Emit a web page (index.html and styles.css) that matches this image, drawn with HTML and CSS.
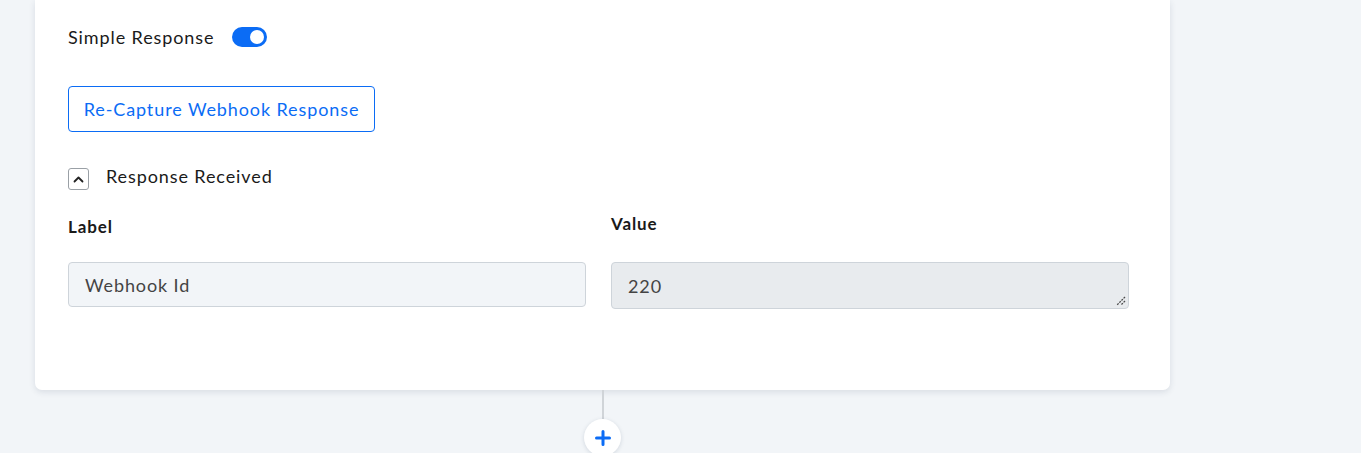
FILE: index.html
```html
<!DOCTYPE html>
<html>
<head>
<meta charset="utf-8">
<link rel="stylesheet" href="styles.css">
</head>
<body>
<div class="page">
  <div class="card">
    <div class="toggle-row">
      <span class="toggle-label">Simple Response</span>
      <span class="switch"><span class="knob"></span></span>
    </div>
    <button class="btn-outline">Re-Capture Webhook Response</button>
    <div class="collapse-row">
      <span class="chev-box">
        <svg width="11" height="7" viewBox="0 0 11 7"><path d="M1.5 5.5 L5.5 1.5 L9.5 5.5" fill="none" stroke="#222" stroke-width="1.8" stroke-linecap="round" stroke-linejoin="round"/></svg>
      </span>
      <span class="collapse-title">Response Received</span>
    </div>
    <div class="fields">
      <div class="field">
        <div class="field-label label-a">Label</div>
        <div class="input">Webhook Id</div>
      </div>
      <div class="field">
        <div class="field-label label-b">Value</div>
        <div class="textarea">220
          <svg class="grip" width="10" height="10" viewBox="0 0 10 10"><path d="M9 1 L1 9 M9 5 L5 9" stroke="#4a4a4a" stroke-width="1.3" stroke-dasharray="2 1"/></svg>
        </div>
      </div>
    </div>
  </div>
  <div class="connector">
    <div class="line"></div>
    <div class="plus">
      <svg width="16" height="16" viewBox="0 0 16 16"><path d="M8 1.5 V14.5 M1.5 8 H14.5" stroke="#0b6cf5" stroke-width="3" stroke-linecap="round"/></svg>
    </div>
  </div>
</div>
</body>
</html>
```

FILE: styles.css
```css
* { box-sizing: border-box; }
html, body { margin: 0; padding: 0; }
body {
  background: #f2f5f8;
  font-family: Lato, "Noto Sans", sans-serif;
  letter-spacing: 0.9px;
  color: #1a1a1a;
  width: 1361px;
  height: 453px;
  overflow: hidden;
}
.page {
  padding-left: 35px;
  width: 1170px;
  display: flex;
  flex-direction: column;
}
.card {
  background: #fff;
  width: 1135px;
  height: 390px;
  border-radius: 0 0 7px 7px;
  box-shadow: 0 2px 6px rgba(30, 50, 80, 0.12);
  padding: 25px 41px 0 33px;
  display: flex;
  flex-direction: column;
}
.toggle-row {
  display: flex;
  align-items: center;
  gap: 18px;
  height: 24px;
}
.toggle-label { font-size: 18px; line-height: 22px; }
.switch {
  width: 35px;
  height: 20px;
  border-radius: 10px;
  background: #0b6cf5;
  position: relative;
  display: inline-block;
}
.knob {
  position: absolute;
  right: 3px;
  top: 3px;
  width: 14px;
  height: 14px;
  border-radius: 50%;
  background: #fff;
}
.btn-outline {
  margin-top: 37px;
  align-self: flex-start;
  width: 307px;
  height: 46px;
  border: 1px solid #0b6cf5;
  border-radius: 4px;
  background: #fff;
  color: #0b6cf5;
  font-family: inherit;
  letter-spacing: 0.9px;
  font-size: 18px;
  padding: 0;
}
.collapse-row {
  margin-top: 35px;
  display: flex;
  align-items: center;
  gap: 17px;
  height: 24px;
}
.chev-box {
  width: 21px;
  height: 22px;
  border: 1px solid #9aa0a6;
  border-radius: 3px;
  display: flex;
  align-items: center;
  justify-content: center;
}
.collapse-title { font-size: 18px; line-height: 18px; align-self: flex-start; }
.fields {
  margin-top: 22px;
  display: grid;
  grid-template-columns: 518px 518px;
  column-gap: 25px;
}
.field { display: flex; flex-direction: column; }
.field-label {
  font-weight: 700;
  font-size: 17px;
  height: 24px;
}
.label-a { margin-top: 3px; margin-bottom: 22px; }
.label-b { margin-bottom: 25px; }
.input, .textarea {
  height: 45px;
  border: 1px solid #ced4da;
  border-radius: 4px;
  padding: 0 16px;
  display: flex;
  align-items: center;
  font-size: 18px;
  color: #444;
}
.input { background: #f2f5f8; }
.textarea {
  background: #e8ebee;
  height: 47px;
  position: relative;
}
.grip { position: absolute; right: 2px; bottom: 2px; }
.connector {
  display: flex;
  flex-direction: column;
  align-items: center;
  width: 1135px;
}
.line {
  width: 2px;
  height: 29px;
  background: #d0d4d8;
}
.plus {
  width: 37px;
  height: 37px;
  border-radius: 50%;
  background: #fff;
  box-shadow: 0 1px 4px rgba(30, 50, 80, 0.15);
  display: flex;
  align-items: center;
  justify-content: center;
}
```
